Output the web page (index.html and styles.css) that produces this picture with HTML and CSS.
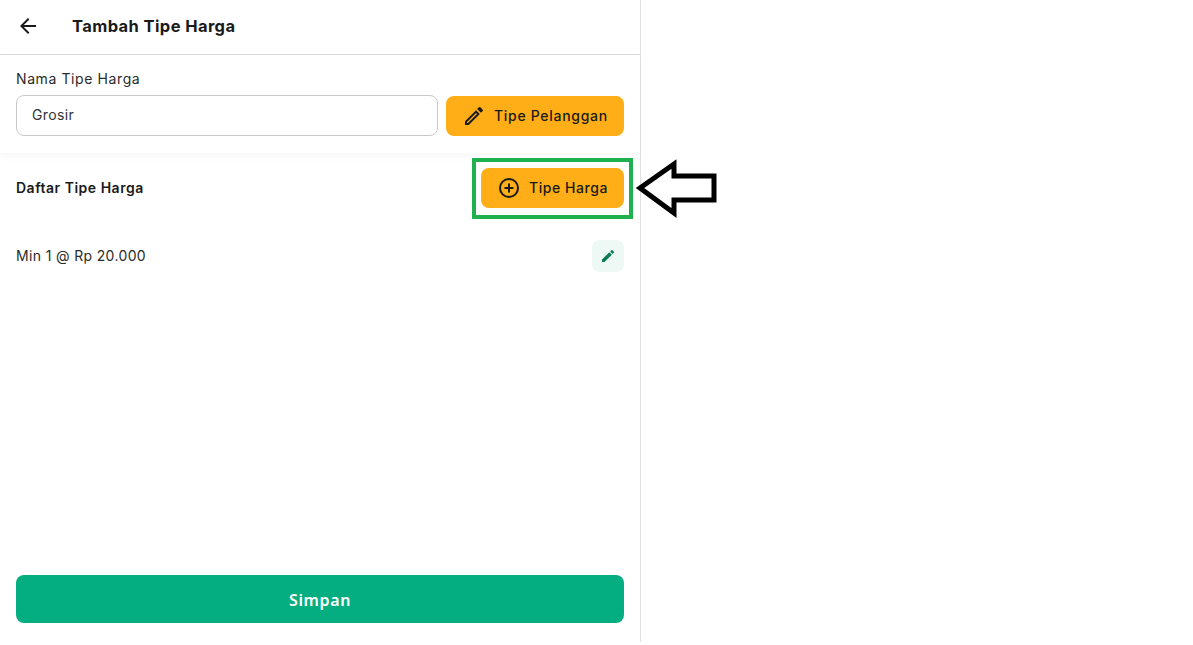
FILE: index.html
```html
<!DOCTYPE html>
<html lang="en">
<head>
  <meta charset="UTF-8">
  <title>Tambah Tipe Harga</title>
  <link rel="stylesheet" href="styles.css">
</head>
<body>
  <div class="panel">
    <header class="top-bar">
      <svg class="back-icon" width="24" height="24" viewBox="0 0 24 24"><path d="M20 11H7.83l5.59-5.59L12 4l-8 8 8 8 1.41-1.41L7.83 13H20v-2z" fill="#1a1a1a"/></svg>
      <h1>Tambah Tipe Harga</h1>
    </header>

    <section class="form-card">
      <label class="field-label" for="priceName">Nama Tipe Harga</label>
      <div class="field-row">
        <input type="text" id="priceName" value="Grosir">
        <button class="btn-amber btn-customer">
          <svg width="24" height="24" viewBox="0 0 24 24"><path d="M3 17.25V21h3.75L17.81 9.94l-3.75-3.75L3 17.25zM5.92 19H5v-.92l9.06-9.06.92.92L5.92 19zM20.71 7.04a1 1 0 0 0 0-1.41l-2.34-2.34a1 1 0 0 0-1.41 0l-1.83 1.83 3.75 3.75 1.83-1.83z" fill="#1a1a1a"/></svg>
          <span class="btn-text">Tipe Pelanggan</span>
        </button>
      </div>
    </section>

    <section class="list-head">
      <h2>Daftar Tipe Harga</h2>
      <button class="btn-amber btn-add">
        <svg width="24" height="24" viewBox="0 0 24 24"><circle cx="12" cy="12" r="9" fill="none" stroke="#1a1a1a" stroke-width="2"/><path d="M12 7.5v9M7.5 12h9" stroke="#1a1a1a" stroke-width="2"/></svg>
        <span class="btn-text">Tipe Harga</span>
      </button>
      <span class="highlight"></span>
      <svg class="arrow" width="84" height="60" viewBox="0 0 84 60"><path d="M5 29 L39 5 V17 H79 V41 H39 V54 Z" fill="#fff" stroke="#000" stroke-width="5"/></svg>
    </section>

    <ul class="price-list">
      <li>
        <span class="row-text">Min 1 @ Rp 20.000</span>
        <button class="btn-edit" aria-label="Edit">
          <svg width="16" height="16" viewBox="0 0 24 24"><path d="M3 17.25V21h3.75L17.81 9.94l-3.75-3.75L3 17.25zM20.71 7.04a1 1 0 0 0 0-1.41l-2.34-2.34a1 1 0 0 0-1.41 0l-1.83 1.83 3.75 3.75 1.83-1.83z" fill="#0b7a57"/></svg>
        </button>
      </li>
    </ul>

    <button class="btn-save">Simpan</button>
  </div>
</body>
</html>
```

FILE: styles.css
```css
* {
  box-sizing: border-box;
}
body {
  margin: 0;
  background: #fff;
  font-family: Inter, 'Noto Sans', sans-serif;
  color: #1a1a1a;
}
button {
  font-family: inherit;
  border: none;
  cursor: pointer;
}
.panel {
  width: 641px;
  height: 642px;
  display: flex;
  flex-direction: column;
  border-right: 1px solid #e0e0e0;
}
.top-bar {
  height: 55px;
  display: flex;
  align-items: center;
  gap: 32px;
  padding: 0 16px 2px;
  border-bottom: 1px solid #d9d9d9;
}
.back-icon {
  flex: none;
}
h1 {
  margin: 0;
  font-size: 16.5px;
  font-weight: 700;
  letter-spacing: 0.4px;
}
.form-card {
  height: 98px;
  padding: 15px 16px 0;
  box-shadow: 0 4px 8px rgba(0, 0, 0, 0.03);
}
.field-label {
  display: block;
  font-size: 14px;
  line-height: 17px;
  letter-spacing: 0.6px;
  color: #2b2b2b;
  margin-bottom: 8px;
}
.field-row {
  display: flex;
  align-items: flex-end;
  gap: 8px;
}
input[type="text"] {
  width: 422px;
  height: 41px;
  padding: 0 15px 2px;
  border: 1px solid #c9c9c9;
  border-radius: 8px;
  font-family: inherit;
  font-size: 14px;
  letter-spacing: 0.35px;
  color: #333;
  outline: none;
}
.btn-amber {
  height: 40px;
  display: flex;
  align-items: center;
  border-radius: 8px;
  background: #ffae17;
  color: #1a1a1a;
  font-size: 14px;
  font-weight: 500;
  letter-spacing: 0.55px;
}
.btn-text {
  padding-bottom: 2px;
}
.btn-customer {
  width: 178px;
  gap: 8px;
  padding: 0 0 0 16px;
  letter-spacing: 0.7px;
}
.btn-add {
  width: 143px;
  gap: 8px;
  padding: 0 0 0 16px;
}
.list-head {
  position: relative;
  display: flex;
  align-items: center;
  justify-content: space-between;
  height: 40px;
  margin: 15px 16px 0;
}
h2 {
  margin: 0;
  padding-bottom: 2px;
  font-size: 14px;
  font-weight: 600;
  letter-spacing: 0.5px;
}
.highlight {
  position: absolute;
  left: 456px;
  top: -10px;
  width: 161px;
  height: 61px;
  border: 4px solid #1fb14e;
}
.arrow {
  position: absolute;
  left: 619px;
  top: -9px;
}
.price-list {
  list-style: none;
  margin: 32px 16px 0;
  padding: 0;
  flex: 1;
}
.price-list li {
  display: flex;
  align-items: center;
  justify-content: space-between;
  height: 32px;
  font-size: 14px;
  letter-spacing: 0.35px;
  color: #2b2b2b;
}
.row-text {
  padding-bottom: 2px;
}
.btn-edit {
  width: 32px;
  height: 32px;
  display: flex;
  align-items: center;
  justify-content: center;
  padding: 0;
  border-radius: 8px;
  background: #eef9f5;
}
.btn-save {
  height: 48px;
  margin: 0 16px 19px;
  padding-top: 2px;
  border-radius: 8px;
  background: #05ae80;
  color: #fff;
  font-family: 'Noto Sans', sans-serif;
  font-size: 16px;
  font-weight: 600;
  letter-spacing: 0.6px;
}
```
